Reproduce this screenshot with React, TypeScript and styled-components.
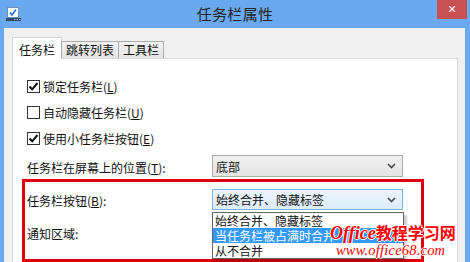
import * as React from 'react';
import styled, { createGlobalStyle } from 'styled-components';

const GlobalStyle = createGlobalStyle`
  html, body {
    margin: 0;
    padding: 0;
    overflow: hidden;
    background: #6aa9f0;
  }
  body {
    font-family: "Noto Sans CJK SC", "Noto Sans", sans-serif;
    font-size: 12px;
    color: #000;
  }
`;

interface CheckItem {
  label: string;
  key: string;
  checked: boolean;
}

const checks: CheckItem[] = [
  { label: '锁定任务栏', key: 'L', checked: true },
  { label: '自动隐藏任务栏', key: 'U', checked: false },
  { label: '使用小任务栏按钮', key: 'E', checked: true },
];

const options = ['始终合并、隐藏标签', '当任务栏被占满时合并', '从不合并'];

function Chevron() {
  return (
    <svg width="9" height="6" viewBox="0 0 9 6">
      <polyline points="1,1 4.5,4.5 8,1" fill="none" stroke="#4a4a4a" strokeWidth="1.6" />
    </svg>
  );
}

function AppIcon() {
  return (
    <svg width="15" height="14" viewBox="0 0 15 14">
      <rect x="1.5" y="0.5" width="11" height="10" fill="#fff" stroke="#6b8fb8" />
      <polyline points="4,5.5 6,8 10,2.5" fill="none" stroke="#1e6fd0" strokeWidth="1.6" />
      <rect x="0" y="11" width="15" height="3" fill="#2f4a6a" />
      <rect x="8" y="12" width="1.5" height="1" fill="#9fb8d6" />
      <rect x="10.5" y="12" width="1.5" height="1" fill="#9fb8d6" />
      <rect x="13" y="12" width="1.5" height="1" fill="#9fb8d6" />
    </svg>
  );
}

export default function App() {
  return (
    <React.Fragment>
      <GlobalStyle />
      <Window>
        <TitleBar>
          <IconSlot>
            <AppIcon />
          </IconSlot>
          <Title>任务栏属性</Title>
          <CloseSlot>
            <CloseButton>✕</CloseButton>
          </CloseSlot>
        </TitleBar>

        <Client>
          <TabRow>
            <Tab $active>任务栏</Tab>
            <Tab>跳转列表</Tab>
            <Tab>工具栏</Tab>
          </TabRow>

          <Panel>
            {checks.map((c) => (
              <CheckRow key={c.key}>
                <CheckBox>
                  {c.checked && (
                    <svg width="11" height="11" viewBox="0 0 11 11">
                      <polyline points="1.5,5.5 4.2,8.3 9.5,2" fill="none" stroke="#111" strokeWidth="2" />
                    </svg>
                  )}
                </CheckBox>
                <span>
                  {c.label}(<u>{c.key}</u>)
                </span>
              </CheckRow>
            ))}

            <FieldRow>
              <FieldLabel>
                任务栏在屏幕上的位置(<u>T</u>):
              </FieldLabel>
              <Combo>
                <span>底部</span>
                <Chevron />
              </Combo>
            </FieldRow>

            <Highlight>
              <FieldRow $height={21}>
                <FieldLabel>
                  任务栏按钮(<u>B</u>):
                </FieldLabel>
                <ComboWrap>
                  <Combo $focused>
                    <span>{options[0]}</span>
                    <Chevron />
                  </Combo>
                  <DropList>
                    {options.map((o, i) => (
                      <DropItem key={o} $selected={i === 1}>
                        {o}
                      </DropItem>
                    ))}
                  </DropList>
                </ComboWrap>
              </FieldRow>
              <FieldRow $height={22} $top={11}>
                <FieldLabel>通知区域:</FieldLabel>
              </FieldRow>
            </Highlight>

            <CheckRow $top={2}>
              <CheckBox $muted />
            </CheckRow>
          </Panel>
        </Client>

        <Watermark>
          <WmTitle>
            <WmLatin>Office</WmLatin>教程学习网
          </WmTitle>
          <WmUrl>www.office68.com</WmUrl>
        </Watermark>
      </Window>
    </React.Fragment>
  );
}

const Window = styled.div`
  position: relative;
  width: 470px;
  height: 262px;
  display: flex;
  flex-direction: column;
  background: #6aa9f0;
  overflow: hidden;
`;

const TitleBar = styled.div`
  height: 28px;
  display: grid;
  grid-template-columns: 1fr auto 1fr;
  align-items: start;
  flex-shrink: 0;
`;

const IconSlot = styled.div`
  padding: 7px 0 0 6px;
  line-height: 0;
`;

const Title = styled.div`
  font-size: 15px;
  line-height: 28px;
  color: #222;
  letter-spacing: 0.3px;
`;

const CloseSlot = styled.div`
  display: flex;
  justify-content: flex-end;
  padding-right: 3px;
`;

const CloseButton = styled.div`
  width: 30px;
  height: 19px;
  background: #c75050;
  color: #fff;
  font-family: "DejaVu Sans", sans-serif;
  font-size: 11px;
  font-weight: bold;
  display: flex;
  align-items: center;
  justify-content: center;
`;

const Client = styled.div`
  flex: 1;
  margin: 0 5px 0 4px;
  padding: 9px 7px 0 8px;
  background: #f0f0f0;
  display: flex;
  flex-direction: column;
  min-height: 0;
`;

const TabRow = styled.div`
  display: flex;
  align-items: flex-end;
  height: 21px;
  position: relative;
  z-index: 1;
`;

const Tab = styled.div<{ $active?: boolean }>`
  box-sizing: border-box;
  height: ${(p) => (p.$active ? '22px' : '17px')};
  margin-bottom: ${(p) => (p.$active ? '-1px' : '0')};
  padding: ${(p) => (p.$active ? '2px 6px 0' : '0 4px')};
  border: 1px solid ${(p) => (p.$active ? '#d9d9d9' : '#acacac')};
  border-bottom: none;
  margin-left: ${(p) => (p.$active ? '0' : '-1px')};
  background: ${(p) => (p.$active ? '#fff' : 'linear-gradient(#f2f2f2, #e5e5e5)')};
  display: flex;
  align-items: center;
  line-height: 14px;
  color: #111;
  &:first-child {
    margin-left: 0;
  }
`;

const Panel = styled.div`
  flex: 1;
  background: #fff;
  border: 1px solid #d9d9d9;
  padding: 14px 0 0 14px;
  display: flex;
  flex-direction: column;
  align-items: flex-start;
`;

const CheckRow = styled.div<{ $top?: number }>`
  height: 26px;
  margin-top: ${(p) => p.$top ?? 0}px;
  display: flex;
  align-items: ${(p) => (p.$top !== undefined ? 'flex-start' : 'center')};
  gap: 3px;
  color: #111;
`;

const CheckBox = styled.span<{ $muted?: boolean }>`
  box-sizing: border-box;
  width: 13px;
  height: 13px;
  border: 1px solid ${(p) => (p.$muted ? '#8a8a8a' : '#333')};
  background: ${(p) => (p.$muted ? '#e6e6e6' : '#fff')};
  display: flex;
  align-items: center;
  justify-content: center;
  flex-shrink: 0;
`;

const FieldRow = styled.div<{ $height?: number; $top?: number }>`
  height: ${(p) => p.$height ?? 22}px;
  margin-top: ${(p) => p.$top ?? 4}px;
  display: flex;
  align-items: center;
`;

const FieldLabel = styled.div`
  width: 185px;
  color: #111;
  padding-top: 2px;
`;

const ComboWrap = styled.div`
  position: relative;
`;

const Combo = styled.div<{ $focused?: boolean }>`
  box-sizing: border-box;
  width: 191px;
  height: ${(p) => (p.$focused ? '21px' : '22px')};
  padding: 0 6px 0 3px;
  border: 1px solid ${(p) => (p.$focused ? '#7eb4ea' : '#acacac')};
  background: ${(p) =>
    p.$focused ? 'linear-gradient(#ecf4fc, #dcecfc)' : 'linear-gradient(#f0f0f0, #e5e5e5)'};
  display: flex;
  align-items: center;
  justify-content: space-between;
  color: #111;
`;

const DropList = styled.div`
  position: absolute;
  top: 23px;
  left: 0;
  width: 192px;
  box-sizing: border-box;
  border: 1px solid #646464;
  background: #fff;
  box-shadow: 3px 3px 2px rgba(0, 0, 0, 0.2);
  z-index: 3;
`;

const DropItem = styled.div<{ $selected?: boolean }>`
  height: 15px;
  line-height: 15px;
  padding-left: 2px;
  background: ${(p) => (p.$selected ? '#3399ff' : '#fff')};
  color: ${(p) => (p.$selected ? '#fff' : '#111')};
  white-space: nowrap;
  overflow: hidden;
`;

const Highlight = styled.div`
  box-sizing: border-box;
  width: 402px;
  margin: 2px 0 0 -5px;
  padding: 3px 0 16px 2px;
  border: 3px solid #e0000c;
  position: relative;
  z-index: 2;
`;

const Watermark = styled.div`
  position: absolute;
  left: 330px;
  top: 223px;
  z-index: 5;
  color: #f00;
  text-shadow: -1px 0 #fff, 1px 0 #fff, 0 -1px #fff, 0 1px #fff;
`;

const WmTitle = styled.div`
  font-family: "Noto Sans CJK SC", sans-serif;
  font-weight: bold;
  font-size: 16px;
  line-height: 19px;
  white-space: nowrap;
`;

const WmLatin = styled.span`
  font-family: "Liberation Serif", serif;
  font-style: italic;
  font-size: 18px;
`;

const WmUrl = styled.div`
  font-family: "Liberation Serif", serif;
  font-style: italic;
  font-size: 14.5px;
  line-height: 15px;
  padding-left: 6px;
  letter-spacing: 0.2px;
`;
